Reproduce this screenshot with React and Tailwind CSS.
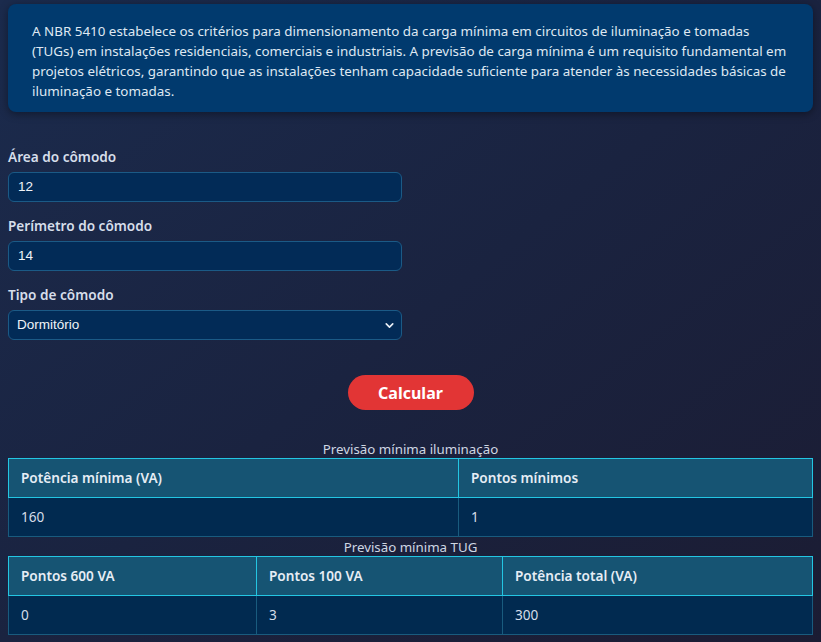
import { ChevronDown } from 'lucide-react'

const font = { fontFamily: '"Noto Sans", "Open Sans", sans-serif' }

function Field({ label, children }) {
  return (
    <div className="mb-[14px]">
      <label className="mb-[5px] block text-[13.6px] font-semibold leading-5 text-[#d6deea]">{label}</label>
      {children}
    </div>
  )
}

function Input({ value }) {
  return (
    <div className="flex h-[30px] w-[394px] items-center rounded-[6px] border border-[#1b5a86] bg-[#022b57] px-[9px] font-['Liberation_Sans',Arial,sans-serif] text-[13.5px] text-[#f0f4f8]">
      {value}
    </div>
  )
}

function ResultTable({ caption, cols, widths, values }) {
  return (
    <div>
      <p className="text-center text-[13.3px] leading-[17px] text-[#cfd7e3]">{caption}</p>
      <table className="w-full table-fixed border-collapse text-[13.6px]">
        <colgroup>
          {widths.map((w, i) => (
            <col key={i} style={{ width: w }} />
          ))}
        </colgroup>
        <thead>
          <tr>
            {cols.map((c) => (
              <th key={c} className="h-[39px] border border-[#23c6e3] bg-[#165473] px-3 text-left font-semibold text-[#e6edf5]">
                {c}
              </th>
            ))}
          </tr>
        </thead>
        <tbody>
          <tr>
            {values.map((v, i) => (
              <td key={i} className="h-[39px] border border-[#195b7e] bg-[#012a50] px-3 text-[#d5dde8]">
                {v}
              </td>
            ))}
          </tr>
        </tbody>
      </table>
    </div>
  )
}

export default function App() {
  return (
    <div
      className="min-h-screen bg-gradient-to-br from-[#1b2b4d] via-[#1a2340] to-[#1b1c33] px-2 pt-[4px] pb-2"
      style={font}
    >
      <div className="rounded-[8px] bg-[#013a6e] px-6 pt-[17px] pb-[11px] text-[13.4px] leading-5 text-[#dfe8f2] shadow-[0_2px_8px_rgba(0,0,0,0.4)]">
        A NBR 5410 estabelece os critérios para dimensionamento da carga mínima em circuitos de iluminação e tomadas
        (TUGs) em instalações residenciais, comerciais e industriais. A previsão de carga mínima é um requisito
        fundamental em projetos elétricos, garantindo que as instalações tenham capacidade suficiente para atender às
        necessidades básicas de iluminação e tomadas.
      </div>

      <div className="mt-[35px]">
        <Field label="Área do cômodo">
          <Input value="12" />
        </Field>
        <Field label="Perímetro do cômodo">
          <Input value="14" />
        </Field>
        <Field label="Tipo de cômodo">
          <div className="flex h-[30px] w-[394px] items-center justify-between rounded-[6px] border border-[#1b5a86] bg-[#022b57] pl-[8px] pr-[5px] font-['Liberation_Sans',Arial,sans-serif] text-[13.5px] text-[#f0f4f8]">
            <span>Dormitório</span>
            <ChevronDown size={13} strokeWidth={3} className="text-[#e8eef5]" />
          </div>
        </Field>
      </div>

      <div className="mt-[35px] flex justify-center">
        <button className="h-[35px] w-[126px] rounded-full bg-[#e23535] text-[16px] font-bold text-white">Calcular</button>
      </div>

      <div className="mt-[31px]">
        <ResultTable
          caption="Previsão mínima iluminação"
          cols={['Potência mínima (VA)', 'Pontos mínimos']}
          widths={['450px', 'auto']}
          values={['160', '1']}
        />
      </div>
      <div className="mt-[2px]">
        <ResultTable
          caption="Previsão mínima TUG"
          cols={['Pontos 600 VA', 'Pontos 100 VA', 'Potência total (VA)']}
          widths={['248px', '246px', 'auto']}
          values={['0', '3', '300']}
        />
      </div>
    </div>
  )
}
